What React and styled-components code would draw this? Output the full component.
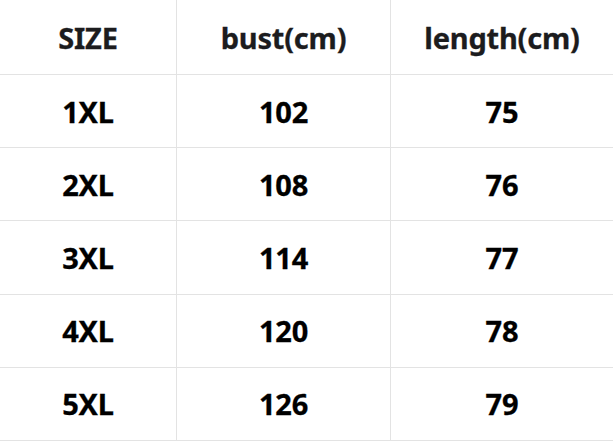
import React from "react";
import styled, { createGlobalStyle } from "styled-components";

const rows = [
  ["1XL", "102", "75"],
  ["2XL", "108", "76"],
  ["3XL", "114", "77"],
  ["4XL", "120", "78"],
  ["5XL", "126", "79"],
];

const Global = createGlobalStyle`
  html, body {
    margin: 0;
    padding: 0;
    background: #fff;
  }
`;

const Table = styled.div`
  width: 613px;
  display: grid;
  grid-template-columns: 176px 214px 1fr;
  font-family: "Noto Sans", "Open Sans", sans-serif;
  font-weight: 700;
`;

const Cell = styled.div`
  height: ${(p) => (p.$head ? "74px" : "72.2px")};
  display: flex;
  align-items: center;
  justify-content: center;
  font-size: 29px;
  color: ${(p) => (p.$head ? "#1c1c1e" : "#000")};
  border-bottom: 1px solid #e3e3e3;
  border-left: ${(p) => (p.$first ? "none" : "1px solid #e3e3e3")};
  letter-spacing: -0.2px;
  -webkit-text-stroke: 0.3px currentColor;
`;

export default function App() {
  return (
    <>
      <Global />
      <Table>
        <Cell $head $first>SIZE</Cell>
        <Cell $head>bust(cm)</Cell>
        <Cell $head>length(cm)</Cell>
        {rows.map((r) =>
          r.map((v, i) => (
            <Cell key={r[0] + i} $first={i === 0}>
              {v}
            </Cell>
          ))
        )}
      </Table>
    </>
  );
}
